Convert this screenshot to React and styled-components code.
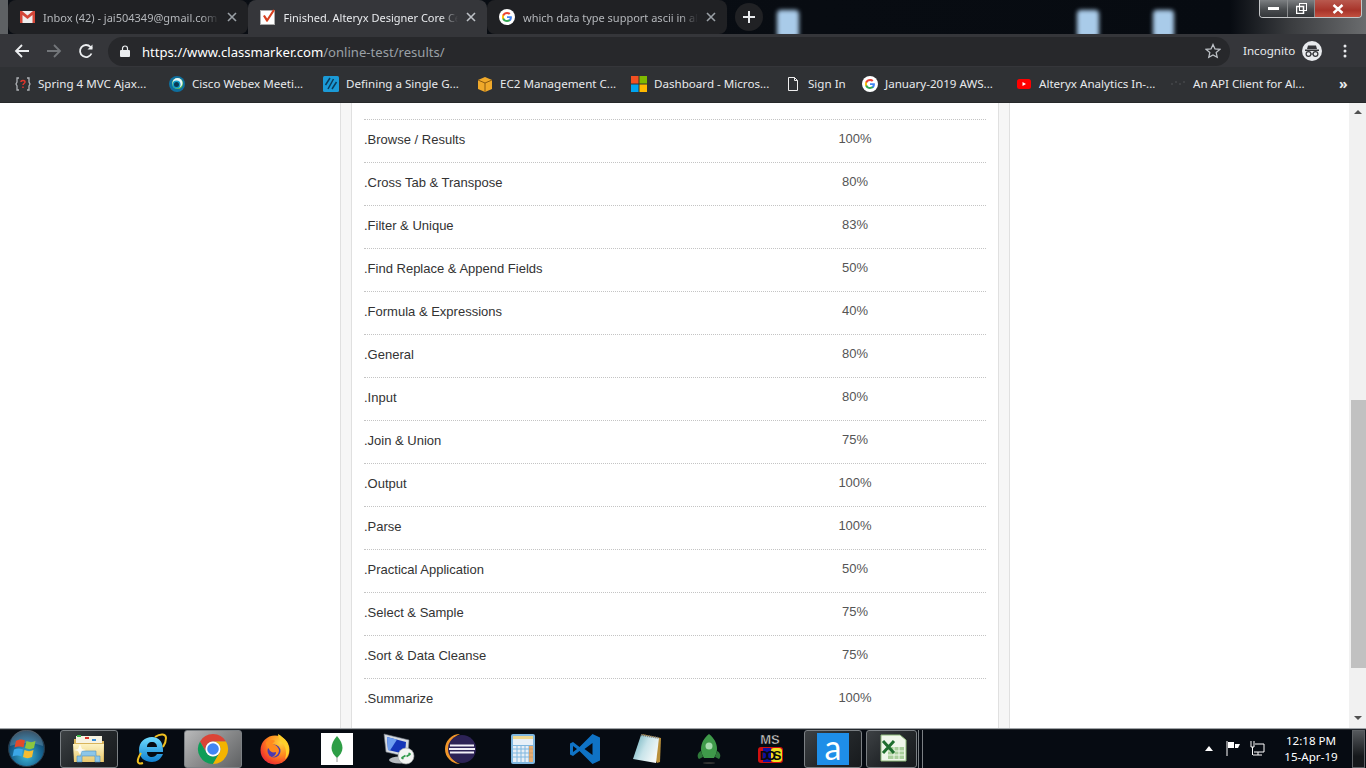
import React from "react"
import styled, { createGlobalStyle } from "styled-components"

const GlobalStyle = createGlobalStyle`
  html, body { margin: 0; padding: 0; height: 100%; overflow: hidden; background: #fff; }
  #root { height: 100%; }
  * { box-sizing: border-box; }
`

const uiFont = `"Noto Sans", "Open Sans", sans-serif`
const tabBg = "#202124"
const barBg = "#35363a"

const Screen = styled.div`
  width: 1366px;
  height: 768px;
  display: flex;
  flex-direction: column;
  overflow: hidden;
  font-family: "Liberation Sans", Arial, sans-serif;
`

/* browser chrome */
const TabStrip = styled.div`
  position: relative;
  height: 34px;
  flex: none;
  display: flex;
  align-items: stretch;
  padding-left: 8px;
  overflow: hidden;
  background: linear-gradient(90deg, #5e6164 0, #5e6164 8px, #0a0e14 8px, #070b11 1230px, #3a3c3f 1290px, #6a6c6e 1366px);
`

const Tab = styled.div`
  width: 239.5px;
  display: flex;
  align-items: center;
  padding: 0 11px 0 12px;
  gap: 8px;
  background: ${(p) => (p.$active ? barBg : tabBg)};
  color: ${(p) => (p.$active ? "#e8eaed" : "#b4b7bb")};
  border-radius: ${(p) => (p.$active ? "8px 8px 0 0" : "8px")};
  font: 11px ${uiFont};
`

const TabTitle = styled.span`
  flex: 1;
  overflow: hidden;
  white-space: nowrap;
  -webkit-mask-image: linear-gradient(90deg, #000 90%, transparent 100%);
  mask-image: linear-gradient(90deg, #000 90%, transparent 100%);
`

const NewTab = styled.div`
  width: 28px;
  height: 28px;
  margin: 3px 0 0 8px;
  border-radius: 50%;
  background: ${tabBg};
  display: flex;
  align-items: center;
  justify-content: center;
`

const Blob = styled.div`
  position: absolute;
  top: 10px;
  left: ${(p) => p.$x}px;
  width: ${(p) => p.$w}px;
  height: 28px;
  border-radius: 4px;
  background: #a9cbe9;
  filter: blur(2px);
`

const WindowControls = styled.div`
  position: absolute;
  top: 0;
  right: 4px;
  width: 103px;
  height: 18px;
  display: flex;
  border: 1px solid #c4c6c8;
  border-top: none;
  border-radius: 0 0 4px 4px;
  overflow: hidden;
`

const WinButton = styled.div`
  display: flex;
  align-items: center;
  justify-content: center;
  width: ${(p) => p.$w}px;
  border-right: ${(p) => (p.$close ? "none" : "1px solid #8a8c8e")};
  background: ${(p) =>
    p.$close
      ? "linear-gradient(180deg, #b9594e 0, #a8342a 60%, #c2503f 100%)"
      : "linear-gradient(180deg, #7c7f82 0, #4a4d50 55%, #34373a 100%)"};
`

const Toolbar = styled.div`
  height: 33px;
  flex: none;
  display: flex;
  align-items: center;
  background: ${barBg};
  padding-left: 14px;
`

const NavButton = styled.div`
  width: 32px;
  display: flex;
  align-items: center;
`

const Omnibox = styled.div`
  width: 1122px;
  height: 29px;
  margin-left: -2px;
  margin-top: 1px;
  border-radius: 15px;
  background: #27282b;
  display: flex;
  align-items: center;
  padding: 0 9px 0 12px;
  font: 13.1px ${uiFont};
  color: #fff;
`

const UrlHost = styled.span`
  margin-left: 12px;
  padding-top: 1px;
  flex: 1;
  white-space: nowrap;
  & > span { color: #9aa0a6; }
`

const IncognitoLabel = styled.span`
  margin-left: 13px;
  width: 56px;
  font: 11.6px ${uiFont};
  color: #e8eaed;
  white-space: nowrap;
`

const ToolIcon = styled.div`
  display: flex;
  margin-left: ${(p) => p.$ml || 0}px;
  padding-top: 1px;
`

const BookmarkBar = styled.div`
  height: 36px;
  flex: none;
  display: flex;
  align-items: center;
  padding: 0 0 2px 15px;
  background: #2f3134;
  border-bottom: 1px solid #26282a;
  color: #e8eaed;
  font: 11.6px ${uiFont};
`

const Bookmark = styled.div`
  width: ${(p) => p.$w || 154}px;
  display: flex;
  align-items: center;
  gap: 7px;
  white-space: nowrap;
`

const Chevron = styled.span`
  margin-left: 19px;
  color: #e8eaed;
  font: bold 14px ${uiFont};
`

/* page */
const Viewport = styled.div`
  flex: 1;
  min-height: 0;
  display: flex;
  background: #fff;
`

const PageArea = styled.div`
  flex: 1;
  min-width: 0;
  padding-left: 340px;
  overflow: hidden;
`

const Panel = styled.div`
  width: 670px;
  height: 100%;
  border-left: 1px solid #e0e0e0;
  border-right: 1px solid #e0e0e0;
  background: #f6f6f6;
  padding: 0 10px;
`

const PanelInner = styled.div`
  height: 100%;
  background: #fff;
  border-left: 1px solid #e0e0e0;
  border-right: 1px solid #e0e0e0;
  padding: 16px 12px 0;
`

const Row = styled.div`
  height: 43px;
  display: grid;
  grid-template-columns: 1fr 262px;
  align-items: center;
  padding-bottom: 4px;
  border-top: 1px dotted #c4c4c4;
  font-size: 13px;
`

const Topic = styled.span`
  color: #333;
`

const Percent = styled.span`
  color: #555;
  text-align: center;
  margin-top: -2px;
`

const Scrollbar = styled.div`
  width: 17px;
  flex: none;
  display: flex;
  flex-direction: column;
  background: #f1f1f1;
`

const ScrollSpace = styled.div`
  height: ${(p) => p.$h}px;
  flex: none;
`

const ScrollThumb = styled.div`
  height: 268px;
  flex: none;
  margin-left: 2px;
  background: #c1c1c1;
`

const ScrollArrow = styled.div`
  margin: ${(p) => (p.$up ? "7px auto 0" : "auto auto 8px")};
  width: 0;
  height: 0;
  flex: none;
  border-left: 4px solid transparent;
  border-right: 4px solid transparent;
  border-top: ${(p) => (p.$up ? "none" : "4px solid #505050")};
  border-bottom: ${(p) => (p.$up ? "4px solid #505050" : "none")};
`

/* windows taskbar */
const Taskbar = styled.div`
  height: 40px;
  flex: none;
  display: flex;
  align-items: center;
  background: #060b12;
  border-top: 1px solid #a0a4a8;
  box-shadow: inset 0 1px 0 #23272c;
  padding-left: 8px;
`

const Orb = styled.div`
  width: 50px;
  display: flex;
`

const TaskSlot = styled.div`
  width: 62px;
  height: 38px;
  flex: none;
  display: flex;
  align-items: center;
  padding: 0 2px;
`

const TaskButton = styled.div`
  width: ${(p) => p.$w || 58}px;
  height: 38px;
  display: flex;
  align-items: center;
  justify-content: center;
  border-radius: 3px;
  border: ${(p) => (p.$state === "none" ? "none" : "1px solid #7b8084")};
  background: ${(p) =>
    p.$state === "active"
      ? "linear-gradient(135deg, #b9babb 0, #8e8f90 45%, #5f6163 100%)"
      : p.$state === "open"
      ? "linear-gradient(135deg, #3d4144 0, #24282b 50%, #171a1d 100%)"
      : "none"};
`

const TaskEnd = styled.div`
  width: 5px;
  height: 38px;
  margin-left: -8px;
  border-left: 1px solid #7b8084;
  border-right: 1px solid #7b8084;
`

const Tray = styled.div`
  margin-left: auto;
  height: 38px;
  display: flex;
  align-items: center;
`

const TrayIcon = styled.div`
  display: flex;
  margin-left: ${(p) => p.$ml || 0}px;
`

const Clock = styled.div`
  width: 76px;
  margin-left: 8px;
  text-align: center;
  color: #fff;
  font: 11.6px/16px ${uiFont};
`

const ShowDesktop = styled.div`
  width: 13px;
  height: 38px;
  margin: 0 1px 0 3px;
  border: 1px solid #5d6165;
  background: linear-gradient(180deg, #54585c, #15181b 70%);
`

const topics = [
  [".Browse / Results", "100%"],
  [".Cross Tab & Transpose", "80%"],
  [".Filter & Unique", "83%"],
  [".Find Replace & Append Fields", "50%"],
  [".Formula & Expressions", "40%"],
  [".General", "80%"],
  [".Input", "80%"],
  [".Join & Union", "75%"],
  [".Output", "100%"],
  [".Parse", "100%"],
  [".Practical Application", "50%"],
  [".Select & Sample", "75%"],
  [".Sort & Data Cleanse", "75%"],
  [".Summarize", "100%"],
]

const GoogleIcon = ({ size = 16 }) => (
  <svg width={size} height={size} viewBox="0 0 16 16">
    <circle cx="8" cy="8" r="8" fill="#fff" />
    <path d="M12.9 8.2c0-.4 0-.7-.1-1H8v1.9h2.8c-.1.6-.5 1.2-1 1.5v1.3h1.6c1-.9 1.5-2.200 1.500-3.700z" fill="#4285f4" />
    <path d="M8 13c1.400 0 2.500-.5 3.400-1.200l-1.600-1.300c-.5.3-1 .5-1.800.5-1.300 0-2.500-.9-2.900-2.100H3.400v1.300C4.200 11.900 6 13 8 13z" fill="#34a853" />
    <path d="M5.100 8.900C5 8.600 4.900 8.300 4.900 8s.1-.6.2-.9V5.800H3.400C3.100 6.500 3 7.200 3 8s.1 1.500.4 2.200z" fill="#fbbc05" />
    <path d="M8 5c.8 0 1.500.3 2 .8l1.500-1.500C10.600 3.500 9.400 3 8 3 6 3 4.200 4.100 3.400 5.800l1.700 1.300C5.500 5.900 6.700 5 8 5z" fill="#ea4335" />
  </svg>
)

const GmailIcon = () => (
  <svg width="15" height="12" viewBox="0 0 15 12">
    <rect width="15" height="12" fill="#eee" />
    <path d="M0 0h2l5.500 4.500L13 0h2v12h-2.500V4L7.500 8 2.500 4v8H0z" fill="#d44638" />
  </svg>
)

const CheckIcon = () => (
  <svg width="16" height="16" viewBox="0 0 16 16">
    <rect x="0.5" y="1.500" width="14" height="14" fill="#fff" stroke="#aaa" />
    <path d="M3 7l1.800-1 2.400 3.500L13 0.500l2 .8-7.500 11.500h-1z" fill="#d8401f" />
  </svg>
)

const Icons = {
  bug: (
    <svg width="16" height="16" viewBox="0 0 16 16" fill="none">
      <path d="M4 2H2v4L1 8l1 2v4h2M12 2h2v4l1 2-1 2v4h-2" stroke="#aeb1b5" strokeWidth="1.300" />
      <path d="M6 6c0-2 4-2 4 0 0 1.500-2 1.500-2 3M8 10.500v1.500" stroke="#e0352b" strokeWidth="1.500" />
    </svg>
  ),
  webex: (
    <svg width="16" height="16" viewBox="0 0 16 16">
      <circle cx="8" cy="8" r="8" fill="#0f6f9e" />
      <circle cx="8.500" cy="7.500" r="5.500" fill="#6cc24a" />
      <circle cx="8.500" cy="7" r="5" fill="#e8f6fb" />
      <circle cx="7.500" cy="8.500" r="4" fill="#14a0c8" />
      <circle cx="7.500" cy="8.500" r="2.500" fill="#0a3a55" />
    </svg>
  ),
  stitch: (
    <svg width="16" height="16" viewBox="0 0 16 16">
      <rect width="16" height="16" rx="1.500" fill="#1b9ad6" />
      <path d="M7 2L2.500 9M10.500 3L5 13M13.500 6L9 13" stroke="#0b3b5a" strokeWidth="1.500" />
    </svg>
  ),
  box: (
    <svg width="16" height="16" viewBox="0 0 16 16">
      <path d="M1 4l7-3 7 3v9l-7 3-7-3z" fill="#f0a92a" />
      <path d="M1 4l7 3 7-3M8 7v9" stroke="#8a5a10" strokeWidth="1" fill="none" />
    </svg>
  ),
  ms: (
    <svg width="16" height="16" viewBox="0 0 16 16">
      <rect width="7.500" height="7.500" fill="#f25022" />
      <rect x="8.500" width="7.500" height="7.500" fill="#7fba00" />
      <rect y="8.500" width="7.500" height="7.500" fill="#00a4ef" />
      <rect x="8.500" y="8.500" width="7.500" height="7.500" fill="#ffb900" />
    </svg>
  ),
  page: (
    <svg width="16" height="16" viewBox="0 0 16 16" fill="none">
      <path d="M3.500 1.500h6l3 3v10h-9zM9.500 1.500v3h3" stroke="#eee" strokeWidth="1" />
    </svg>
  ),
  youtube: (
    <svg width="16" height="16" viewBox="0 0 16 16">
      <rect x="1" y="3" width="14" height="10" rx="2.500" fill="#f00" />
      <path d="M6.500 6v4L10 8z" fill="#fff" />
    </svg>
  ),
  faint: (
    <svg width="16" height="16" viewBox="0 0 16 16">
      <path d="M1 8h2M5 6h2M9 8h2M13 6h2" stroke="#45474a" strokeWidth="1.500" />
    </svg>
  ),
}

const bookmarks = [
  ["bug", "Spring 4 MVC Ajax..."],
  ["webex", "Cisco Webex Meeti..."],
  ["stitch", "Defining a Single G..."],
  ["box", "EC2 Management C..."],
  ["ms", "Dashboard - Micros..."],
  ["page", "Sign In", 77],
  ["google", "January-2019 AWS...", 154],
  ["youtube", "Alteryx Analytics In-..."],
  ["faint", "An API Client for Al...", 150],
]

const CloseX = ({ color = "#9aa0a6" }) => (
  <svg width="10" height="10" viewBox="0 0 10 10">
    <path d="M1 1l8 8M9 1l-8 8" stroke={color} strokeWidth="1.600" />
  </svg>
)

const taskIcons = [
  <svg key="explorer" width="34" height="32" viewBox="0 0 34 32">
    <defs>
      <linearGradient id="fold" x1="0" y1="0" x2="0" y2="1">
        <stop offset="0" stopColor="#fdf3c4" />
        <stop offset="1" stopColor="#e8c86e" />
      </linearGradient>
    </defs>
    <path d="M2 6h13l2 2h15v21H2z" fill="#d9b45c" />
    <rect x="4" y="3" width="26" height="7" fill="#f7f3e2" />
    <rect x="5" y="2" width="4" height="2" fill="#39b54a" />
    <rect x="13" y="4" width="4" height="2" fill="#d9352b" />
    <rect x="20" y="6" width="4" height="2" fill="#3b8fd9" />
    <path d="M1 11h31l-1 18H2z" fill="url(#fold)" />
    <path d="M5 29v-6h4v-5h15v5h4v6h-5v-6H10v6z" fill="#8cc6e8" stroke="#4d8fb8" strokeWidth="0.600" />
    <path d="M6 16l2-5 2 5 4 1-4 1-2 4-2-4-4-1z" fill="#fff" opacity="0.800" />
  </svg>,
  <svg key="ie" width="32" height="32" viewBox="0 0 32 32">
    <defs>
      <linearGradient id="iee" x1="0" y1="0" x2="0" y2="1">
        <stop offset="0" stopColor="#6fdcff" />
        <stop offset="1" stopColor="#0f7fd0" />
      </linearGradient>
    </defs>
    <path d="M4 17C4 9 10 4 17 4c7 0 11 5 11 13v2H12c0 3 2 5 5 5 2 0 4-1 5-3h6c-2 5-6 8-11 8-8 0-13-5-13-12zm8-3h10c0-3-2-5-5-5s-5 2-5 5z" fill="url(#iee)" />
    <path d="M6 20C1 28 2 32 8 30M20 4c6-4 11-3 11 1 0 3-1 6-3 9" stroke="#f0c020" strokeWidth="2" fill="none" />
  </svg>,
  <svg key="chrome" width="32" height="32" viewBox="0 0 32 32">
    <path d="M16 8.500H29A15 15 0 0 0 3 8.500L9.500 19.750A7.500 7.500 0 0 1 16 8.500z" fill="#db4437" />
    <path d="M3 8.500A15 15 0 0 0 16 31L22.500 19.750A7.500 7.500 0 0 1 9.500 19.750z" fill="#0f9d58" />
    <path d="M16 31A15 15 0 0 0 29 8.500H16A7.500 7.500 0 0 1 22.500 19.750z" fill="#f4b400" />
    <circle cx="16" cy="16" r="7.500" fill="#fff" />
    <circle cx="16" cy="16" r="5.800" fill="#4285f4" />
  </svg>,
  <svg key="firefox" width="32" height="32" viewBox="0 0 32 32">
    <defs>
      <radialGradient id="ffx" cx="0.700" cy="0.250" r="0.950">
        <stop offset="0" stopColor="#ffd23a" />
        <stop offset="0.450" stopColor="#ff8a1e" />
        <stop offset="0.800" stopColor="#f0382c" />
        <stop offset="1" stopColor="#d81e6a" />
      </radialGradient>
    </defs>
    <circle cx="16" cy="17" r="14.500" fill="url(#ffx)" />
    <path d="M19 1c7 4 12 10 11 18-1 3-2 6-4 7 2-5 1-12-2-15-2-3-5-6-5-10z" fill="#ffd02a" />
    <circle cx="15" cy="18" r="6.500" fill="#4a3ab0" />
    <path d="M7 9c3-2 7-3 9-1l-3 3c2 0 6 2 7 6 0 4-3 7-7 7 3-1 4-3 4-5-3 1-6 0-7-3-2-2-3-4-3-7z" fill="#ff8a1e" />
  </svg>,
  <svg key="mongo" width="32" height="32" viewBox="0 0 32 32">
    <rect width="32" height="32" fill="#fff" />
    <path d="M16 3c3.500 4 5.500 8 5.500 12s-2.500 7-5.500 10c-3-3-5.500-6-5.500-10s2-8 5.500-12z" fill="#2e9e46" />
    <rect x="15.500" y="24" width="1" height="5" fill="#9a9a9a" />
  </svg>,
  <svg key="rdp" width="32" height="32" viewBox="0 0 32 32">
    <ellipse cx="17" cy="27" rx="11" ry="3.500" fill="#b5b9be" />
    <path d="M1 1l25 6-1 17L3 19z" fill="#d5dae0" stroke="#6e7680" strokeWidth="0.600" />
    <path d="M4 4l19 5-1 12L5 17z" fill="#1536b8" />
    <path d="M4 4l10 2.500-7 11-2-.5z" fill="#6f9ff0" />
    <circle cx="23" cy="23" r="8" fill="#f2f4f2" stroke="#9aa0a0" strokeWidth="0.600" />
    <path d="M18.500 25l4-2.500M18.500 25l2 .8M27.500 21l-4 2.500M27.500 21l-2-.8" stroke="#2f9a4a" strokeWidth="1.600" />
  </svg>,
  <svg key="eclipse" width="32" height="32" viewBox="0 0 32 32">
    <path d="M15 1A15 15 0 0 0 15 31 16 16 0 0 1 15 1z" fill="#f0962a" />
    <circle cx="17" cy="16" r="14" fill="#2c2255" />
    <path d="M5 12.500h24M4 16h26M5 19.500h24" stroke="#f2f0f8" strokeWidth="1.800" />
  </svg>,
  <svg key="calc" width="24" height="30" viewBox="0 0 24 30">
    <rect width="24" height="30" rx="2" fill="#7fb7e0" />
    <rect x="2" y="2" width="20" height="9" fill="#e8f0f8" />
    <rect x="2" y="2" width="20" height="3" fill="#f0d890" />
    <rect x="2" y="12" width="20" height="16" fill="#e8eef5" />
    <path d="M2 15h20M2 19h20M2 23h20M6 12v16M10 12v16M14 12v16M18 12v16" stroke="#7fb7e0" />
    <rect x="18" y="12" width="4" height="16" fill="#e8923a" opacity="0.700" />
  </svg>,
  <svg key="vscode" width="32" height="32" viewBox="0 0 32 32">
    <path d="M23.500 1L10.500 14 4 9 1 10.500v11L4 23l6.500-5 13 13 7.500-3.500v-23zM23.500 10v12l-8-6zM4 13l4 3-4 3z" fill="#0f73c5" fillRule="evenodd" />
  </svg>,
  <svg key="notepad" width="30" height="32" viewBox="0 0 30 32">
    <defs>
      <linearGradient id="note" x1="0" y1="0" x2="1" y2="0.500">
        <stop offset="0" stopColor="#5fa8b4" />
        <stop offset="0.550" stopColor="#c8e4ea" />
        <stop offset="1" stopColor="#f4f8f8" />
      </linearGradient>
    </defs>
    <path d="M10 1l19 4-1 24-3 1z" fill="#b98f3a" />
    <path d="M9 2l18 3-3 25L1 26z" fill="url(#note)" />
    <path d="M9 2l18 3" stroke="#777" strokeWidth="2" strokeDasharray="1 1" />
  </svg>,
  <svg key="rocket" width="26" height="32" viewBox="0 0 26 32">
    <path d="M13 1c5 4 8 9 8 15 0 3-1 6-3 9H8c-2-3-3-6-3-9 0-6 3-11 8-15z" fill="#3f9a4a" />
    <circle cx="13" cy="13" r="3.500" fill="#a8dcb0" />
    <path d="M5 18c-4 2-4 6-2 8l4-2M21 18c4 2 4 6 2 8l-4-2" fill="#2f7a3a" />
    <ellipse cx="13" cy="30" rx="6" ry="1" fill="#333" />
  </svg>,
  <svg key="dos" width="26" height="32" viewBox="0 0 26 32">
    <rect x="0" y="14" width="25" height="16" rx="3" fill="#d01010" />
    <rect x="5" y="15" width="8" height="14" fill="#1010a0" />
    <rect x="13" y="15" width="11" height="14" rx="3" fill="#f0e020" />
    <text x="12" y="11" textAnchor="middle" fontFamily="Liberation Sans" fontWeight="bold" fontSize="13" fill="#d8d8d8" stroke="#111" strokeWidth="0.500">MS</text>
    <text x="12.500" y="27" textAnchor="middle" fontFamily="Liberation Sans" fontWeight="bold" fontSize="13" fill="#0a0a0a" textLength="22">DOS</text>
  </svg>,
  <svg key="alteryx" width="32" height="32" viewBox="0 0 32 32">
    <rect width="32" height="32" fill="#1e8ee8" />
    <text x="16" y="27" textAnchor="middle" fontFamily="Lato" fontSize="34" fill="#fff">a</text>
  </svg>,
  <svg key="excel" width="32" height="32" viewBox="0 0 32 32">
    <path d="M5 2h19l6 5v21H5z" fill="#eff6ea" stroke="#8dbb7a" />
    <path d="M12 14h16v12H12z" fill="#a9cf9b" />
    <path d="M12 18h16M12 22h16M18 14v12M23 14v12" stroke="#eff6ea" />
    <path d="M7 8l11 12M18 8L7 20" stroke="#1f6e2e" strokeWidth="3" />
  </svg>,
]

const taskStates = ["open", "none", "active", "none", "none", "none", "none", "none", "none", "none", "none", "none", "open", "open"]

const App = () => (
  <Screen>
    <GlobalStyle />
    <TabStrip>
      <Tab>
        <GmailIcon />
        <TabTitle>Inbox (42) - jai504349@gmail.com</TabTitle>
        <CloseX />
      </Tab>
      <Tab $active>
        <CheckIcon />
        <TabTitle>Finished. Alteryx Designer Core Certification</TabTitle>
        <CloseX color="#bdc1c6" />
      </Tab>
      <Tab>
        <GoogleIcon />
        <TabTitle>which data type support ascii in alteryx</TabTitle>
        <CloseX />
      </Tab>
      <NewTab>
        <svg width="12" height="12" viewBox="0 0 12 12">
          <path d="M6 0v12M0 6h12" stroke="#e8eaed" strokeWidth="2" />
        </svg>
      </NewTab>
      <Blob $x={777} $w={22} />
      <Blob $x={1077} $w={22} />
      <Blob $x={1153} $w={21} />
      <WindowControls>
        <WinButton $w={28}>
          <svg width="11" height="4" viewBox="0 0 11 4"><rect width="11" height="3" fill="#fff" /></svg>
        </WinButton>
        <WinButton $w={27}>
          <svg width="11" height="11" viewBox="0 0 11 11" fill="none">
            <rect x="3.500" y="0.500" width="7" height="7" stroke="#fff" />
            <rect x="0.500" y="3.500" width="7" height="7" stroke="#fff" strokeWidth="1.500" />
          </svg>
        </WinButton>
        <WinButton $w={46} $close>
          <svg width="12" height="10" viewBox="0 0 12 10">
            <path d="M1.500 1l9 8M10.500 1l-9 8" stroke="#fff" strokeWidth="2.400" />
          </svg>
        </WinButton>
      </WindowControls>
    </TabStrip>

    <Toolbar>
      <NavButton>
        <svg width="16" height="16" viewBox="0 0 16 16" fill="none">
          <path d="M15 8H2M8 2L2 8l6 6" stroke="#eceef0" strokeWidth="1.800" />
        </svg>
      </NavButton>
      <NavButton>
        <svg width="16" height="16" viewBox="0 0 16 16" fill="none">
          <path d="M1 8h13M8 2l6 6-6 6" stroke="#73767a" strokeWidth="1.800" />
        </svg>
      </NavButton>
      <NavButton>
        <svg width="16" height="16" viewBox="0 0 16 16" fill="none">
          <path d="M13.500 10.500A6 6 0 1 1 12.500 4L14 5.500" stroke="#eceef0" strokeWidth="1.800" />
          <path d="M14.500 1.500v5h-5z" fill="#eceef0" />
        </svg>
      </NavButton>
      <Omnibox>
        <svg width="10" height="12" viewBox="0 0 10 12">
          <rect y="5" width="10" height="7" rx="1" fill="#eceef0" />
          <path d="M2.500 5V3.500a2.500 2.500 0 0 1 5 0V5" stroke="#eceef0" strokeWidth="1.200" fill="none" />
        </svg>
        <UrlHost>
          https://www.classmarker.com<span>/online-test/results/</span>
        </UrlHost>
        <svg width="16" height="16" viewBox="0 0 16 16" fill="none">
          <path d="M8 1.500l2 4.400 4.800.5-3.600 3.200 1 4.700L8 11.900l-4.200 2.400 1-4.700L1.200 6.400 6 5.900z" stroke="#bdc1c6" strokeWidth="1.300" />
        </svg>
      </Omnibox>
      <IncognitoLabel>Incognito</IncognitoLabel>
      <ToolIcon $ml={3}>
        <svg width="20" height="20" viewBox="0 0 20 20">
          <circle cx="10" cy="10" r="10" fill="#e8eaed" />
          <path d="M6 4.500h8l1 3.500H5zM3 8.500h14V10H3z" fill="#35363a" />
          <circle cx="6.500" cy="13" r="2.400" fill="none" stroke="#35363a" strokeWidth="1.200" />
          <circle cx="13.500" cy="13" r="2.400" fill="none" stroke="#35363a" strokeWidth="1.200" />
          <path d="M9 13h2" stroke="#35363a" />
        </svg>
      </ToolIcon>
      <ToolIcon $ml={21}>
        <svg width="4" height="14" viewBox="0 0 4 14" fill="#e8eaed">
          <circle cx="2" cy="2" r="1.500" />
          <circle cx="2" cy="7" r="1.500" />
          <circle cx="2" cy="12" r="1.500" />
        </svg>
      </ToolIcon>
    </Toolbar>

    <BookmarkBar>
      {bookmarks.map(([icon, label, width]) => (
        <Bookmark key={label} $w={width}>
          {icon === "google" ? <GoogleIcon /> : Icons[icon]}
          <span>{label}</span>
        </Bookmark>
      ))}
      <Chevron>»</Chevron>
    </BookmarkBar>

    <Viewport>
      <PageArea>
        <Panel>
          <PanelInner>
            {topics.map(([topic, percent]) => (
              <Row key={topic}>
                <Topic>{topic}</Topic>
                <Percent>{percent}</Percent>
              </Row>
            ))}
          </PanelInner>
        </Panel>
      </PageArea>
      <Scrollbar>
        <ScrollArrow $up />
        <ScrollSpace $h={286} />
        <ScrollThumb />
        <ScrollArrow />
      </Scrollbar>
    </Viewport>

    <Taskbar>
      <Orb>
        <svg width="37" height="37" viewBox="0 0 37 37">
          <defs>
            <radialGradient id="orb" cx="0.500" cy="0.700" r="0.700">
              <stop offset="0" stopColor="#3fb8d8" />
              <stop offset="0.600" stopColor="#17628f" />
              <stop offset="1" stopColor="#0c2f4a" />
            </radialGradient>
          </defs>
          <circle cx="18.500" cy="18.500" r="18" fill="url(#orb)" stroke="#2a3a48" />
          <path d="M2 16a16 16 0 0 1 33 0c-10-4-22-4-33 0z" fill="#fff" opacity="0.180" />
          <path d="M8 11c3-2 6-2 9-.5l-1.500 7c-3-1.500-6-1.500-9 0z" fill="#e24a2a" />
          <path d="M18.500 11c3 1.500 6 1.500 9 0l-1.500 7c-3 1.500-6 1.500-9 0z" fill="#8cc63f" />
          <path d="M6 19.500c3-1.500 6-1.500 9 0l-1.500 7c-3-1.500-6-1.500-9 0z" fill="#3ba7e8" />
          <path d="M16.500 20c3 1.500 6 1.500 9 0l-1.500 7c-3 1.500-6 1.500-9 0z" fill="#f7bc30" />
        </svg>
      </Orb>
      {taskIcons.map((icon, i) => (
        <TaskSlot key={i}>
          <TaskButton $state={taskStates[i]} $w={i === 13 ? 51 : 58}>{icon}</TaskButton>
        </TaskSlot>
      ))}
      <TaskEnd />
      <Tray>
        <TrayIcon>
          <svg width="8" height="5" viewBox="0 0 8 5"><path d="M4 0l4 5H0z" fill="#fff" /></svg>
        </TrayIcon>
        <TrayIcon $ml={13}>
          <svg width="15" height="15" viewBox="0 0 15 15">
            <path d="M1 0v15" stroke="#fff" />
            <path d="M2 1h6v6H2zM9 3h5l-2 4H9z" fill="#fff" />
          </svg>
        </TrayIcon>
        <TrayIcon $ml={9}>
          <svg width="15" height="15" viewBox="0 0 15 15" fill="none">
            <path d="M1 0v6h3V0M2.500 6v8" stroke="#fff" />
            <path d="M5 3h9v8H4M3 14h9M8 11v3" stroke="#fff" />
          </svg>
        </TrayIcon>
        <Clock>
          <div>12:18 PM</div>
          <div>15-Apr-19</div>
        </Clock>
        <ShowDesktop />
      </Tray>
    </Taskbar>
  </Screen>
)

export default App
